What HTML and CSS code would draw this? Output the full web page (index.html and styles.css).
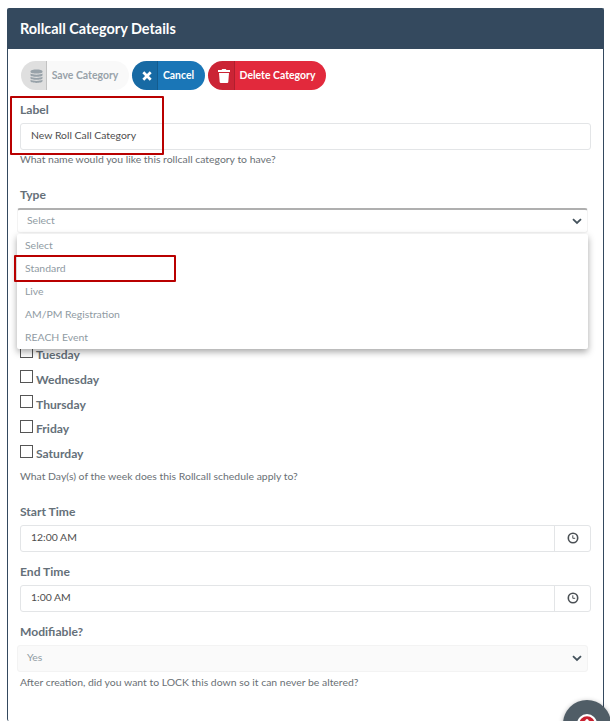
FILE: index.html
```html
<!DOCTYPE html>
<html lang="en">
<head>
<meta charset="utf-8">
<title>Rollcall Category Details</title>
<link rel="stylesheet" href="styles.css">
</head>
<body>
<section class="panel">
  <header class="panel-head">Rollcall Category Details</header>
  <div class="panel-body">
    <div class="actions">
      <button class="btn save"><span class="ico"><svg width="13" height="14" viewBox="0 0 13 14"><g fill="#98a2a9"><path d="M.5 2.3C.5-.2 12.500-.2 12.500 2.300V3C12.500 5 .5 5 .5 3Z"/><path d="M.5 4.500C2.500 6 10.500 6 12.500 4.500V6.300C12.500 8.300.5 8.300.5 6.300Z"/><path d="M.5 7.800C2.500 9.300 10.500 9.300 12.500 7.800V9.300C12.500 11.300.5 11.300.5 9.300Z"/><path d="M.5 10.800C2.500 12.300 10.500 12.300 12.500 10.800V12C12.500 14.500.5 14.500.5 12Z"/></g></svg></span><span class="txt">Save Category</span></button>
      <button class="btn cancel"><span class="ico"><svg width="10" height="10" viewBox="0 0 10 10"><path d="M1.300 1.300 8.700 8.700M8.700 1.300 1.300 8.700" stroke="#fff" stroke-width="2.700"/></svg></span><span class="txt">Cancel</span></button>
      <button class="btn delete"><span class="ico"><svg width="12" height="14" viewBox="0 0 12 14"><path fill="#fff" d="M0 1H3.500L4.300 0H7.700L8.500 1H12V3H0ZM1 4H11L10.300 13Q10.200 14 9.200 14H2.800Q1.800 14 1.700 13Z"/></svg></span><span class="txt">Delete Category</span></button>
    </div>

    <label class="title">Label</label>
    <div class="input">New Roll Call Category</div>
    <p class="help name-help">What name would you like this rollcall category to have?</p>

    <label class="title">Type</label>
    <div class="select open">
      <span>Select</span>
      <svg class="chev" width="10" height="7" viewBox="0 0 10 7"><path d="M1 1.200 5 5 9 1.200" fill="none" stroke="#44525c" stroke-width="1.800"/></svg>
      <ul class="menu">
        <li>Select</li><li>Standard</li><li>Live</li><li>AM/PM Registration</li><li>REACH Event</li>
      </ul>
    </div>

    <div class="days">
      <label class="day"><i></i><span>Tuesday</span></label>
      <label class="day"><i></i><span>Wednesday</span></label>
      <label class="day"><i></i><span>Thursday</span></label>
      <label class="day"><i></i><span>Friday</span></label>
      <label class="day"><i></i><span>Saturday</span></label>
    </div>
    <p class="help day-help">What Day(s) of the week does this Rollcall schedule apply to?</p>

    <label class="title">Start Time</label>
    <div class="input time"><span>12:00 AM</span><span class="addon"><svg width="12" height="12" viewBox="0 0 12 12"><circle cx="6" cy="6" r="4.700" fill="none" stroke="#4b5055" stroke-width="1.600"/><path d="M5.800 3.300V6.300H8.200" fill="none" stroke="#4b5055"/></svg></span></div>
    <label class="title end">End Time</label>
    <div class="input time"><span>1:00 AM</span><span class="addon"><svg width="12" height="12" viewBox="0 0 12 12"><circle cx="6" cy="6" r="4.700" fill="none" stroke="#4b5055" stroke-width="1.600"/><path d="M5.800 3.300V6.300H8.200" fill="none" stroke="#4b5055"/></svg></span></div>
    <label class="title end">Modifiable?</label>
    <div class="select locked">
      <span>Yes</span>
      <svg class="chev" width="10" height="7" viewBox="0 0 10 7"><path d="M1 1.200 5 5 9 1.200" fill="none" stroke="#44525c" stroke-width="1.800"/></svg>
    </div>
    <p class="help">After creation, did you want to LOCK this down so it can never be altered?</p>
  </div>
</section>
<div class="mark mark-label"></div>
<div class="mark mark-standard"></div>
<div class="support"><svg width="48" height="48" viewBox="0 0 48 48"><circle cx="24" cy="24" r="10" fill="#fff"/><circle cx="24" cy="24" r="5.800" fill="none" stroke="#c8202f" stroke-width="4"/><circle cx="24" cy="20.500" r="1.500" fill="#fff"/></svg></div>
</body>
</html>
```
FILE: styles.css
```css
* { box-sizing: border-box; }
html { overflow: hidden; }
body {
  margin: 0;
  height: 721px;
  padding: 8px 6px 0 7px;
  overflow: hidden;
  position: relative;
  background: #fff;
  font-family: Lato, "Liberation Sans", sans-serif;
  font-size: 10.43px;
  color: #5c6268;
}
.panel { height: 713px; border: 1px solid #34495e; border-bottom: 0; border-radius: 2px; }
.panel-head {
  height: 40px;
  padding-left: 12px;
  background: #34495e;
  color: #fff;
  font-size: 14.45px;
  font-weight: 700;
  line-height: 39px;
}
.panel-body { padding: 12px 12px 0; }
.actions { display: flex; gap: 3px; height: 40px; padding-left: 1px; }
.btn {
  display: flex;
  height: 29px;
  padding: 0;
  border: 0;
  border-radius: 15px;
  overflow: hidden;
  color: #fff;
  font: 700 10.45px Lato, "Liberation Sans", sans-serif;
}
.ico {
  display: flex;
  align-items: center;
  justify-content: center;
  width: 26px;
  height: 29px;
  padding-left: 5px;
  border-right: 1px solid rgba(0, 0, 0, .13);
  background: rgba(0, 0, 0, .1);
}
.txt { flex: 1; line-height: 28px; text-align: center; white-space: nowrap; }
.save { width: 108px; background: #f9f9f9; color: #98a2a9; }
.save .txt { padding-right: 6px; }
.cancel { width: 73px; background: #1a76b7; }
.cancel .ico { padding-left: 4px; }
.cancel .txt { padding-right: 6px; }
.delete { width: 118px; background: #e2293c; }
.delete .ico { padding-left: 6px; width: 27px; }
.delete .txt { padding-right: 6px; }

.title {
  display: block;
  height: 22px;
  line-height: 18px;
  font-size: 12.1px;
  font-weight: 700;
  color: #657079;
}
.title.end { height: 33px; padding-top: 11px; }
.input {
  display: flex;
  justify-content: space-between;
  height: 27px;
  padding-left: 10px;
  border: 1px solid #e3e5e7;
  border-radius: 3px;
  line-height: 23px;
  color: #4d4d4d;
}
.addon {
  display: flex;
  align-items: center;
  justify-content: center;
  width: 36px;
  border-left: 1px solid #e3e5e7;
}
.help { margin: 0; height: 36px; line-height: 14px; padding-top: 3px; color: #6a7075; }
.name-help { padding-top: 2px; }
.select {
  position: relative;
  display: flex;
  align-items: center;
  justify-content: space-between;
  margin: 0 3px 0 -3px;
  padding: 0 5px 0 9px;
  border: 1px solid #f3f3f3;
  border-radius: 3px;
  line-height: 14px;
  color: #909ba3;
}
.select > span { padding-bottom: 2px; }
.open { height: 25px; border-top: 2px solid #afafaf; }
.locked { height: 27px; background: #fafafa; }
.menu {
  position: absolute;
  z-index: 1;
  top: 24px;
  left: -1px;
  right: -1px;
  height: 115px;
  margin: 0;
  padding: 0 0 0 8px;
  list-style: none;
  background: #fff;
  border-radius: 2px;
  box-shadow: 0 3px 7px rgba(0, 0, 0, .35);
}
.menu li { height: 23px; line-height: 22px; }
.days { margin-top: 112px; }
.day { display: flex; gap: 3px; height: 24.800px; font-size: 12.1px; font-weight: 700; line-height: 19px; color: #657079; }
.day i { width: 13px; height: 13px; margin-top: .4px; border: 1px solid #555; }
.day-help { height: 34px; padding-top: 0; }
.mark { position: absolute; z-index: 3; border: 2px solid #b90000; border-radius: 1px; }
.mark-label { left: 10px; top: 96px; width: 154px; height: 59px; }
.mark-standard { left: 14px; top: 255px; width: 162px; height: 27px; }
.support {
  position: absolute;
  left: 563px;
  top: 700px;
  width: 48px;
  height: 48px;
  border-radius: 50%;
  background: #505d66;
  box-shadow: 0 1px 5px rgba(0, 0, 0, .3);
}
```
